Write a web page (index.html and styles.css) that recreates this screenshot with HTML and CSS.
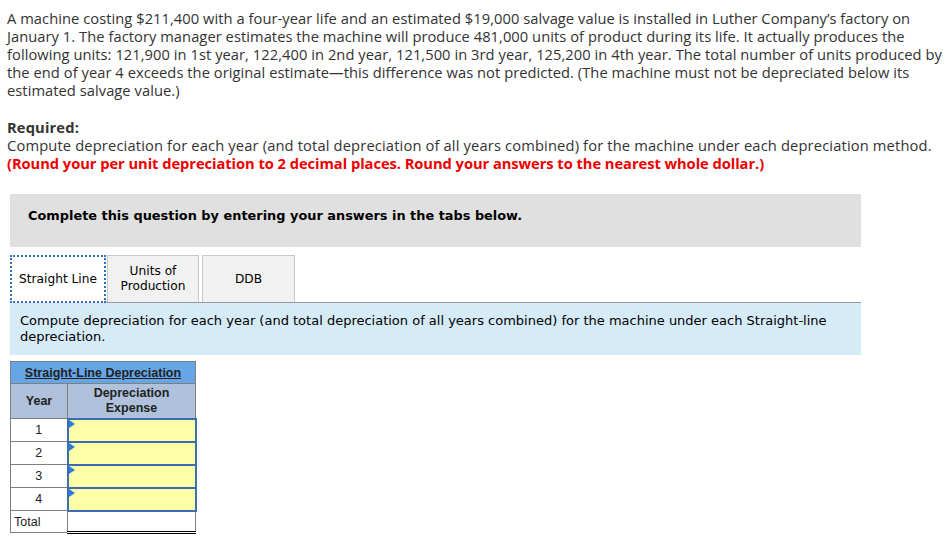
FILE: index.html
```html
<!DOCTYPE html>
<html>
<head>
<meta charset="utf-8">
<link rel="stylesheet" href="styles.css">
</head>
<body>
<p class="intro">A machine costing $211,400 with a four-year life and an estimated $19,000 salvage value is installed in Luther Company’s factory on<br>January 1. The factory manager estimates the machine will produce 481,000 units of product during its life. It actually produces the<br>following units: 121,900 in 1st year, 122,400 in 2nd year, 121,500 in 3rd year, 125,200 in 4th year. The total number of units produced by<br>the end of year 4 exceeds the original estimate—this difference was not predicted. (The machine must not be depreciated below its<br>estimated salvage value.)</p>
<div class="req">
  <div class="req-title">Required:</div>
  <div>Compute depreciation for each year (and total depreciation of all years combined) for the machine under each depreciation method.</div>
  <div class="red">(Round your per unit depreciation to 2 decimal places. Round your answers to the nearest whole dollar.)</div>
</div>
<div class="banner">Complete this question by entering your answers in the tabs below.</div>
<div class="tabs">
  <div class="tab active">Straight Line</div>
  <div class="tab">Units of<br>Production</div>
  <div class="tab ddb">DDB</div>
</div>
<div class="panel">Compute depreciation for each year (and total depreciation of all years combined) for the machine under each Straight-line depreciation.</div>
<table class="grid">
  <tr><th colspan="2" class="title"><u>Straight-Line Depreciation</u></th></tr>
  <tr><th class="hyear">Year</th><th class="hexp">Depreciation<br>Expense</th></tr>
  <tr><td class="yr">1</td><td class="inp"><span class="flag"></span></td></tr>
  <tr><td class="yr">2</td><td class="inp"><span class="flag"></span></td></tr>
  <tr><td class="yr">3</td><td class="inp"><span class="flag"></span></td></tr>
  <tr><td class="yr">4</td><td class="inp"><span class="flag"></span></td></tr>
  <tr><td class="tot">Total</td><td class="totv"></td></tr>
</table>
</body>
</html>
```
FILE: styles.css
```css
body {
  margin: 0;
  padding: 0 7px;
  font-family: "Open Sans", "Lato", sans-serif;
  color: #333;
  background: #fff;
}
.intro {
  margin: 9px 0 0;
  font-size: 14.7px;
  letter-spacing: 0.05px;
  line-height: 18px;
  white-space: nowrap;
}
.req {
  margin-top: 19px;
  font-size: 14.7px;
  letter-spacing: 0.15px;
  line-height: 18px;
}
.req-title { font-weight: 700; }
.red { color: #ee0000; font-weight: 700; letter-spacing: -0.05px; }
.banner {
  margin: 22px 0 0 3px;
  width: 851px;
  height: 53px;
  box-sizing: border-box;
  background: #e0e0e0;
  padding: 13px 18px 0;
  font-family: "DejaVu Sans", Verdana, sans-serif;
  font-weight: 700;
  font-size: 12.9px;
  line-height: 18px;
  color: #000;
}
.tabs {
  display: flex;
  margin: 8px 0 0 3px;
  width: 851px;
  border-bottom: 1px solid #999;
  gap: 1px;
}
.tab {
  box-sizing: border-box;
  height: 47px;
  background: #f1f1f1;
  border: 1px solid #c8c8c8;
  border-bottom: none;
  display: flex;
  align-items: center;
  justify-content: center;
  text-align: center;
  font-family: "DejaVu Sans", Verdana, sans-serif;
  font-size: 12.2px;
  line-height: 15px;
  color: #000;
  width: 92px;
}
.tab.active {
  width: 96px;
  background: #fff;
  border: 2px dotted #2e6fc0;
  height: 48px;
  margin-bottom: -1px;
}
.tab.ddb { margin-left: 2px; width: 93px; }
.panel {
  margin-left: 3px;
  width: 851px;
  box-sizing: border-box;
  height: 52px;
  background: #d6ebf8;
  padding: 10px 10px 0;
  font-family: "DejaVu Sans", Verdana, sans-serif;
  font-size: 13px;
  line-height: 16px;
  color: #000;
}
.grid {
  margin: 6px 0 0 3px;
  border-collapse: collapse;
  font-family: "Liberation Sans", Arial, sans-serif;
  font-size: 12.5px;
  color: #222;
}
.grid th, .grid td {
  border: 1px solid #7f7f7f;
  padding: 0;
  box-sizing: border-box;
}
.title {
  background: #66a6e6;
  height: 22px;
  font-size: 12.5px;
  font-weight: 700;
  color: #222;
  line-height: 14px;
}
.hyear, .hexp {
  background: #afc1db;
  height: 35px;
  line-height: 15px;
  font-weight: 700;
}
.hyear { width: 57px; }
.hexp { width: 128px; }
.yr {
  height: 23px;
  text-align: center;
  background: #fff;
}
.inp {
  position: relative;
  height: 23px;
  background: #ffffa8;
  border: 2px solid #3a6db2 !important;
}
.flag {
  position: absolute;
  left: 0;
  top: 0;
  width: 0;
  height: 0;
  border-top: 4px solid transparent;
  border-bottom: 4px solid transparent;
  border-left: 6px solid #2f7ae0;
}
.tot {
  height: 22px;
  padding-left: 3px !important;
  background: #fff;
}
.totv {
  background: #fff;
  border-bottom: 3px double #000 !important;
}
```
